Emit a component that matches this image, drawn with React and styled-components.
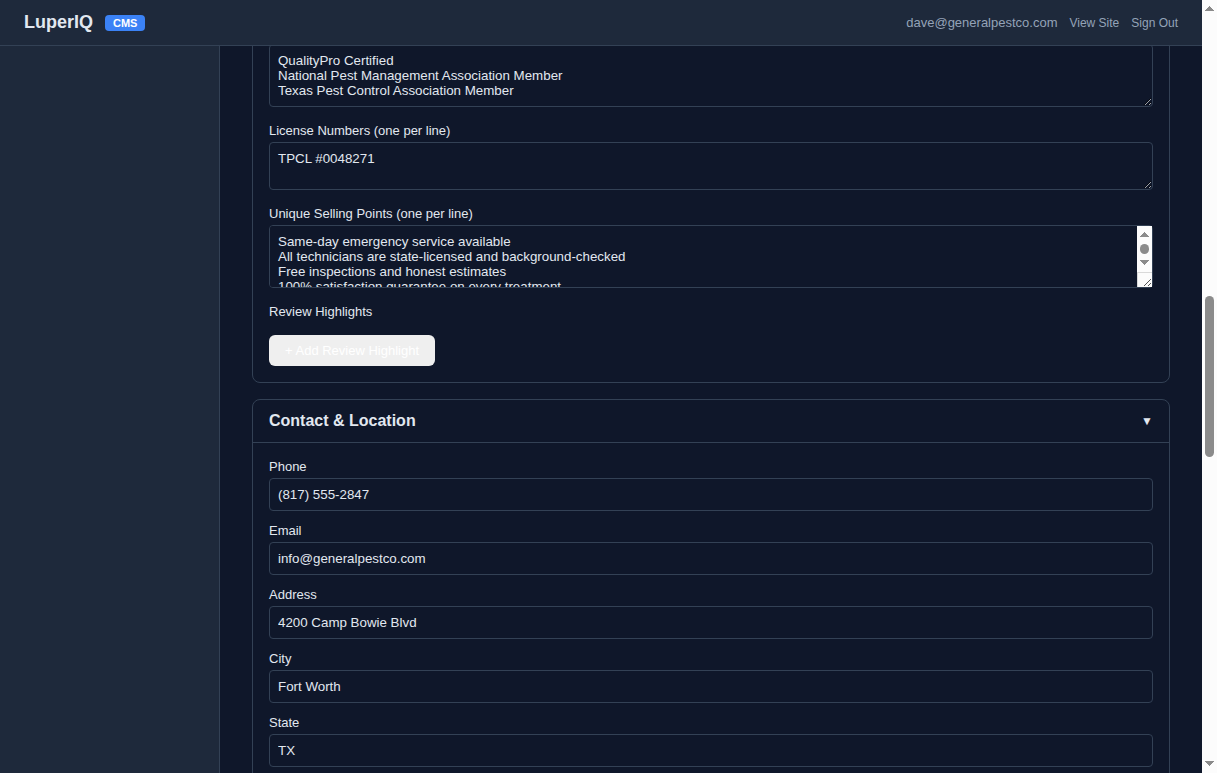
import styled, { createGlobalStyle } from "styled-components";

const certifications = [
  "QualityPro Certified",
  "National Pest Management Association Member",
  "Texas Pest Control Association Member",
].join("\n");

const sellingPoints = [
  "Same-day emergency service available",
  "All technicians are state-licensed and background-checked",
  "Free inspections and honest estimates",
  "100% satisfaction guarantee on every treatment",
].join("\n");

const contactFields = [
  { id: "phone", label: "Phone", value: "(817) 555-2847", type: "tel" },
  { id: "email", label: "Email", value: "info@generalpestco.com", type: "email" },
  { id: "address", label: "Address", value: "4200 Camp Bowie Blvd" },
  { id: "city", label: "City", value: "Fort Worth" },
  { id: "state", label: "State", value: "TX" },
];

const Scrollbar = ({ before, thumb, after }) => (
  <Track aria-hidden="true">
    <Arrow viewBox="0 0 15 15">
      <path d="M7 6h1v1h1v1h1v1h1v1h1v1H3v-1h1V9h1V8h1V7h1z" />
    </Arrow>
    <Rail>
      <Space $grow={before} />
      <Thumb $grow={thumb} />
      <Space $grow={after} />
    </Rail>
    <Arrow viewBox="0 0 15 15">
      <path d="M3 3h9v1h-1v1h-1v1H9v1H8v1H7V7H6V6H5V5H4V4H3z" />
    </Arrow>
  </Track>
);

const AreaField = ({ id, label, rows, value, scrolls }) => (
  <Field $area>
    <Label htmlFor={id}>{label}</Label>
    <AreaWrap>
      <TextArea id={id} rows={rows} defaultValue={value} spellCheck={false} />
      {scrolls && (
        <AreaScroll>
          <Scrollbar before={3} thumb={10} after={3} />
          <Corner viewBox="0 0 15 15" aria-hidden="true">
            <path className="edge" d="M0 .5h15M.5 0v15" />
            <path className="grip" d="M7 14l7-7M11 14l3-3" />
          </Corner>
        </AreaScroll>
      )}
    </AreaWrap>
  </Field>
);

const TextField = ({ id, label, value, type = "text" }) => (
  <Field>
    <Label htmlFor={id}>{label}</Label>
    <Input id={id} type={type} defaultValue={value} />
  </Field>
);

const App = () => {
  return (
    <Root>
      <GlobalStyle />
      <Shell>
        <TopBar>
          <Brand>LuperIQ</Brand>
          <Badge>CMS</Badge>
          <Account>
            <span>dave@generalpestco.com</span>
            <TopLink href="#site">View Site</TopLink>
            <TopLink href="#logout">Sign Out</TopLink>
          </Account>
        </TopBar>
        <Columns>
          <Sidebar />
          <Main>
            <Card $scrolled>
              <CardBody>
                <Field $area>
                  <TextArea
                    aria-label="Certifications"
                    rows={3}
                    defaultValue={certifications}
                    spellCheck={false}
                  />
                </Field>
                <AreaField
                  id="licenses"
                  label="License Numbers (one per line)"
                  rows={2}
                  value="TPCL #0048271"
                />
                <AreaField
                  id="usps"
                  label="Unique Selling Points (one per line)"
                  rows={3}
                  value={sellingPoints}
                  scrolls
                />
                <GroupTitle>Review Highlights</GroupTitle>
                <AddButton type="button">+ Add Review Highlight</AddButton>
              </CardBody>
            </Card>
            <Card>
              <CardHeader>
                <CardTitle>Contact &amp; Location</CardTitle>
                <Toggle type="button" aria-label="Collapse section">
                  ▼
                </Toggle>
              </CardHeader>
              <CardBody>
                {contactFields.map((field) => (
                  <TextField key={field.id} {...field} />
                ))}
              </CardBody>
            </Card>
          </Main>
        </Columns>
      </Shell>
      <Scrollbar before={281} thumb={161} after={301} />
    </Root>
  );
};

export default App;

const GlobalStyle = createGlobalStyle`
  * {
    box-sizing: border-box;
  }

  body {
    margin: 0;
    background: #0f172a;
    color: #e2e8f0;
    font-family: "Liberation Sans", Arial, sans-serif;
  }
`;

const Root = styled.div`
  display: flex;
  height: 100vh;
  overflow: hidden;
`;

const Shell = styled.div`
  flex: 1;
  min-width: 0;
  display: flex;
  flex-direction: column;
`;

const TopBar = styled.header`
  display: flex;
  align-items: center;
  gap: 12px;
  padding: 12px 24px;
  background: #1e293b;
  border-bottom: 1px solid #334155;
`;

const Brand = styled.div`
  font-size: 18px;
  font-weight: 700;
  line-height: 21px;
`;

const Badge = styled.span`
  padding: 2px 8px;
  border-radius: 4px;
  background: #3b82f6;
  color: #fff;
  font-size: 11px;
  font-weight: 700;
  line-height: 12px;
`;

const Account = styled.div`
  display: flex;
  align-items: center;
  gap: 12px;
  margin-left: auto;
  color: #94a3b8;
  font-size: 13px;
`;

const TopLink = styled.a`
  color: #94a3b8;
  font-size: 12px;
  text-decoration: none;
`;

const Columns = styled.div`
  flex: 1;
  min-height: 0;
  display: flex;
`;

const Sidebar = styled.aside`
  flex: none;
  width: 220px;
  background: #1e293b;
  border-right: 1px solid #334155;
`;

const Main = styled.main`
  flex: 1;
  min-width: 0;
  padding: 0 32px;
  overflow: hidden;
`;

const Card = styled.section`
  margin-top: ${(props) => (props.$scrolled ? "-19px" : "16px")};
  border: 1px solid #334155;
  border-radius: 8px;
`;

const CardHeader = styled.div`
  display: flex;
  align-items: center;
  justify-content: space-between;
  padding: 12px 16px;
  border-bottom: 1px solid #334155;
`;

const CardTitle = styled.h2`
  margin: 0;
  font-size: 16px;
  font-weight: 700;
  line-height: 18px;
`;

const Toggle = styled.button`
  padding: 0;
  border: 0;
  background: none;
  color: #e2e8f0;
  font-family: inherit;
  font-size: 12px;
  line-height: 14px;
`;

const CardBody = styled.div`
  padding: 16px;
`;

const Field = styled.div`
  margin-bottom: ${(props) => (props.$area ? "16px" : "12px")};
`;

const Label = styled.label`
  display: block;
  margin-bottom: 4px;
  font-size: 13px;
  line-height: 15px;
`;

const GroupTitle = styled.div`
  margin-bottom: 16px;
  font-size: 13px;
  line-height: 15px;
`;

const Input = styled.input`
  display: block;
  width: 100%;
  padding: 8px;
  border: 1px solid #334155;
  border-radius: 4px;
  background: #0f172a;
  color: #e2e8f0;
  font-family: inherit;
`;

const TextArea = styled.textarea`
  display: block;
  width: 100%;
  padding: 8px;
  border: 1px solid #334155;
  border-radius: 4px;
  background: #0f172a;
  color: #e2e8f0;
  font-family: inherit;
  resize: vertical;
`;

const AreaWrap = styled.div`
  position: relative;
`;

const AreaScroll = styled.div`
  position: absolute;
  top: 1px;
  right: 1px;
  bottom: 1px;
  display: flex;
  flex-direction: column;
  pointer-events: none;
`;

const Corner = styled.svg`
  flex: none;
  width: 15px;
  height: 15px;
  background: #fcfcfc;
  fill: none;

  .edge {
    stroke: #d9d9d9;
  }

  .grip {
    stroke: #555;
  }
`;

const AddButton = styled.button`
  display: block;
  padding: 8px 16px;
  border: 0;
  border-radius: 6px;
  background: #efefef;
  color: #fff;
  font-family: inherit;
  font-size: 13px;
  line-height: 15px;
`;

const Track = styled.div`
  flex: 1 0 auto;
  max-width: 15px;
  width: 15px;
  display: flex;
  flex-direction: column;
  background: #fcfcfc;
`;

const Arrow = styled.svg`
  flex: none;
  width: 15px;
  height: 15px;
  fill: #8b8b8b;
`;

const Rail = styled.div`
  flex: 1;
  display: flex;
  flex-direction: column;
  padding: 0 3px;
`;

const Space = styled.div`
  flex: ${(props) => props.$grow};
`;

const Thumb = styled.div`
  flex: ${(props) => props.$grow};
  border-radius: 5px;
  background: #8b8b8b;
`;
